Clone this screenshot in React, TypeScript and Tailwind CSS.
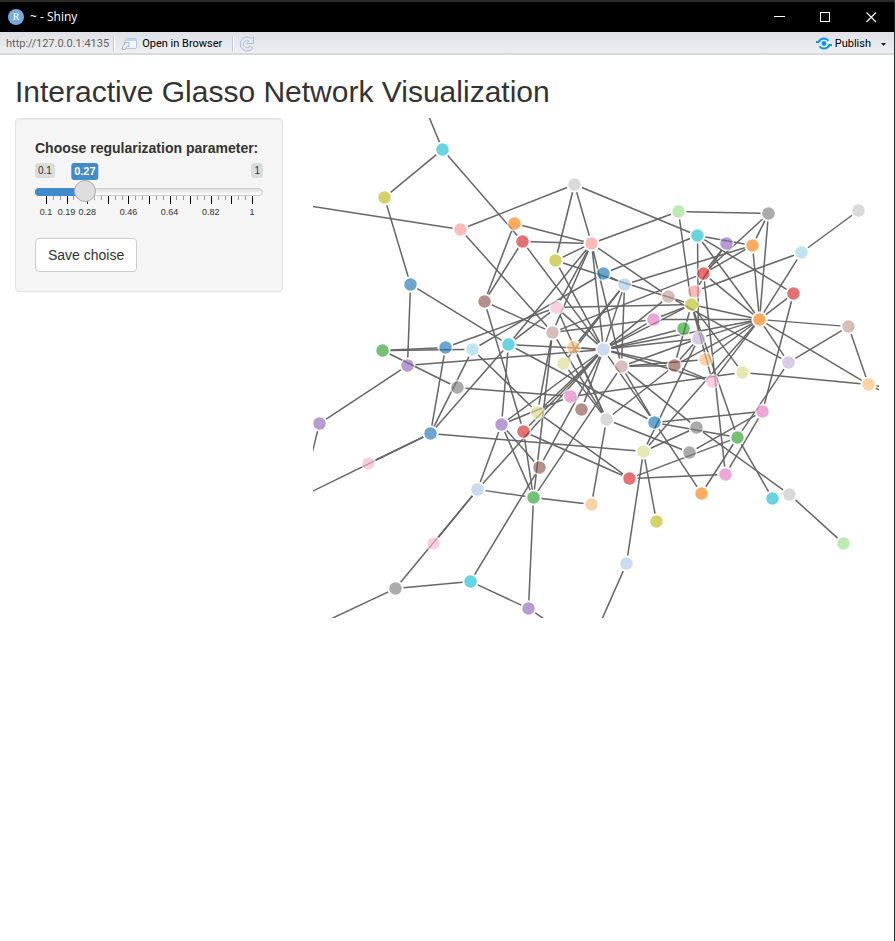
import { useState } from "react";

type Point = [number, number];

const C = {
  blue: "#1f77b4", sky: "#aec7e8", orange: "#ff7f0e", peach: "#ffbb78", green: "#2ca02c", mint: "#98df8a",
  red: "#d62728", salmon: "#ff9896", purple: "#9467bd", lilac: "#c5b0d5", brown: "#8c564b", tan: "#c49c94",
  magenta: "#e377c2", pink: "#f7b6d2", grey: "#7f7f7f", silver: "#c7c7c7", olive: "#bcbd22", khaki: "#dbdb8d",
  cyan: "#17becf", ice: "#9edae5",
};

const nodes: [number, number, string][] = [
  [442, 149, C.cyan], [384, 197, C.olive], [460, 229, C.salmon], [410, 284, C.blue], [514, 223, C.orange],
  [522, 241, C.red], [574, 184, C.silver], [591, 243, C.salmon], [555, 260, C.olive], [603, 273, C.blue],
  [624, 284, C.sky], [484, 301, C.brown], [556, 307, C.pink], [552, 332, C.tan], [508, 344, C.cyan],
  [573, 347, C.peach], [603, 349, C.sky], [563, 363, C.khaki], [621, 366, C.tan], [472, 349, C.ice],
  [445, 347, C.blue], [382, 350, C.green], [407, 365, C.purple], [457, 387, C.grey], [319, 423, C.purple],
  [430, 433, C.blue], [368, 463, C.pink], [477, 489, C.sky], [433, 543, C.pink], [395, 588, C.grey],
  [470, 581, C.cyan], [528, 608, C.purple], [501, 424, C.purple], [523, 431, C.red], [537, 412, C.khaki],
  [570, 396, C.magenta], [581, 409, C.brown], [606, 419, C.silver], [539, 467, C.brown], [533, 497, C.green],
  [591, 504, C.peach], [654, 422, C.blue], [643, 451, C.khaki], [629, 478, C.red], [656, 521, C.olive],
  [626, 563, C.sky], [678, 211, C.mint], [697, 235, C.cyan], [726, 243, C.purple], [752, 245, C.orange],
  [768, 213, C.grey], [703, 273, C.red], [694, 291, C.salmon], [668, 296, C.tan], [691, 304, C.olive],
  [653, 319, C.magenta], [683, 328, C.green], [698, 338, C.lilac], [759, 319, C.orange], [705, 359, C.peach],
  [674, 365, C.brown], [712, 381, C.pink], [742, 372, C.khaki], [801, 252, C.ice], [858, 210, C.silver],
  [793, 293, C.red], [848, 326, C.tan], [788, 362, C.lilac], [868, 384, C.peach], [762, 411, C.magenta],
  [737, 437, C.green], [696, 427, C.grey], [689, 452, C.grey], [725, 474, C.magenta], [701, 493, C.orange],
  [772, 498, C.cyan], [789, 494, C.silver], [843, 543, C.mint],
];

const links: Point[] = [
  [0, 1], [0, 5], [1, 3], [3, 22], [3, 14], [2, 6], [2, 13], [4, 7], [4, 11], [5, 7], [5, 11], [5, 16],
  [6, 8], [6, 7], [6, 47], [7, 46], [7, 8], [7, 53], [8, 54], [9, 10], [7, 14], [7, 12], [7, 13], [7, 16],
  [7, 18], [8, 16], [9, 19], [9, 47], [10, 49], [10, 15], [10, 16], [10, 17], [10, 18], [11, 13], [11, 33],
  [12, 14], [12, 16], [12, 20], [12, 37], [12, 54], [13, 37], [13, 51], [13, 55], [13, 34], [13, 39],
  [14, 16], [14, 41], [14, 32], [14, 25], [15, 37], [15, 16], [17, 37], [16, 22], [16, 32], [16, 34],
  [16, 33], [16, 36], [16, 38], [16, 27], [16, 41], [16, 53], [16, 54], [16, 55], [16, 56], [16, 57],
  [16, 58], [16, 60], [16, 61], [18, 39], [18, 41], [18, 57], [18, 59], [18, 60], [18, 71], [19, 21],
  [19, 25], [19, 34], [20, 21], [20, 25], [21, 23], [22, 24], [23, 35], [25, 26], [25, 42], [27, 28],
  [27, 29], [27, 32], [27, 39], [29, 30], [30, 31], [30, 38], [31, 39], [32, 35], [32, 38], [32, 39],
  [33, 39], [33, 43], [34, 43], [35, 62], [37, 40], [37, 60], [37, 72], [39, 40], [41, 69], [41, 70],
  [41, 74], [42, 44], [42, 45], [42, 57], [42, 58], [42, 71], [43, 70], [43, 73], [46, 50], [46, 54],
  [47, 49], [47, 57], [47, 58], [47, 65], [48, 51], [48, 52], [49, 50], [49, 51], [49, 58], [50, 51],
  [50, 58], [51, 58], [51, 73], [52, 63], [53, 67], [54, 55], [54, 58], [54, 60], [54, 61], [54, 62],
  [54, 70], [55, 58], [57, 58], [57, 60], [58, 59], [58, 60], [58, 61], [58, 63], [58, 65], [58, 66],
  [58, 67], [58, 68], [60, 61], [62, 68], [63, 64], [65, 69], [66, 67], [66, 68], [67, 70], [69, 72],
  [69, 73], [70, 74], [70, 75], [71, 76], [76, 77],
];

// Links whose far end lies outside the visible canvas.
const openLinks: [number, Point][] = [
  [0, [425, 108]], [2, [293, 203]], [25, [293, 500]], [24, [309, 463]], [29, [310, 628]],
  [31, [558, 628]], [45, [597, 629]], [68, [898, 389]], [68, [898, 399]],
];

const GAP = 8;

function Link({ from, to, open }: { from: Point; to: Point; open?: boolean }) {
  const dx = to[0] - from[0];
  const dy = to[1] - from[1];
  const len = Math.hypot(dx, dy);
  const gap = Math.min(GAP, len / 2);
  const ux = (dx / len) * gap;
  const uy = (dy / len) * gap;
  return (
    <line
      x1={from[0] + ux}
      y1={from[1] + uy}
      x2={open ? to[0] : to[0] - ux}
      y2={open ? to[1] : to[1] - uy}
    />
  );
}

function Network() {
  const at = (i: number): Point => [nodes[i][0], nodes[i][1]];
  return (
    <svg viewBox="312.5 117.5 566 500" className="block h-auto w-full overflow-hidden" role="img" aria-label="Network graph">
      <g stroke="#666" strokeWidth="1.5">
        {links.map(([a, b]) => <Link key={`${a}-${b}`} from={at(a)} to={at(b)} />)}
        {openLinks.map(([a, end]) => <Link key={`${a}:${end}`} from={at(a)} to={end} open />)}
      </g>
      {nodes.map(([x, y, fill], i) => (
        <circle key={i} cx={x} cy={y} r="7" fill={fill} stroke="#fff" strokeWidth="1.5" opacity="0.65" />
      ))}
    </svg>
  );
}

const MIN = 0.1;
const MAX = 1;
const scaleLabels = ["0.1", "0.19", "0.28", "0.46", "0.64", "0.82", "1"];

// Left edge of a value on the scale, allowing for half the thumb at each end.
function offset(value: number) {
  const t = (value - MIN) / (MAX - MIN);
  return `calc(11px + (100% - 22px) * ${t})`;
}

function RegularizationSlider() {
  const [value, setValue] = useState(0.27);
  return (
    <div>
      <label htmlFor="rho" className="mb-[5px] block text-sm font-bold">Choose regularization parameter:</label>
      <div className="relative flex h-[17px] items-start justify-between text-[10px] leading-[15px]">
        <span className="rounded-[3px] bg-[#dcdcdc] px-[3px]">0.1</span>
        <span className="rounded-[3px] bg-[#dcdcdc] px-[3px]">1</span>
        <output
          htmlFor="rho"
          className="absolute top-0 -translate-x-1/2 rounded-[3px] bg-[#428bca] px-[3px] text-[11px] leading-[17px] font-bold text-white"
          style={{ left: offset(value) }}
        >
          {value}
        </output>
      </div>
      <div className="relative h-[22px]">
        <div className="absolute inset-x-0 top-2 h-2 rounded-lg border border-[#ccc] bg-linear-to-b from-[#dedede] to-white" />
        <div className="absolute top-2 left-0 h-2 rounded-l-lg bg-[#428bca]" style={{ width: offset(value) }} />
        <svg className="absolute inset-x-0 top-4 h-2 w-full" viewBox="0 0 228 8" preserveAspectRatio="none" shapeRendering="crispEdges" aria-hidden="true">
          {Array.from({ length: 31 }, (_, i) => (
            <rect key={i} x={Math.round(11 + (i * 206) / 30)} y="0" width="1" height={i % 3 ? 4 : 8} fill={i % 3 ? "#999" : "#000"} />
          ))}
        </svg>
        <input
          id="rho"
          type="range"
          min={MIN}
          max={MAX}
          step={0.01}
          value={value}
          onChange={(e) => setValue(Number(e.target.value))}
          className="absolute inset-0 m-0 h-[22px] w-full cursor-pointer appearance-none bg-transparent [&::-webkit-slider-thumb]:size-[22px] [&::-webkit-slider-thumb]:appearance-none [&::-webkit-slider-thumb]:rounded-full [&::-webkit-slider-thumb]:border [&::-webkit-slider-thumb]:border-[#ababab] [&::-webkit-slider-thumb]:bg-[#dedede] [&::-webkit-slider-thumb]:shadow-[1px_1px_3px_rgba(255,255,255,0.3)]"
        />
      </div>
      <div className="relative mt-[5px] h-[11px] text-[9px] leading-[11px]">
        {scaleLabels.map((label) => (
          <span key={label} className="absolute top-0 -translate-x-1/2" style={{ left: offset(Number(label)) }}>{label}</span>
        ))}
      </div>
    </div>
  );
}

function TitleBar() {
  return (
    <header className="flex h-8 items-center border-t-2 border-[#2b2b2b] bg-black pl-2 text-white">
      <svg width="16" height="16" viewBox="0 0 16 16" aria-hidden="true">
        <circle cx="8" cy="8" r="8" fill="#75aadb" />
        <text x="8" y="11" textAnchor="middle" fontSize="10" fill="#fff" className="font-['Liberation_Serif',serif]">R</text>
      </svg>
      <h1 className="ml-1.5 flex-1 text-xs">~ - Shiny</h1>
      <button type="button" aria-label="Minimize" className="grid h-full w-[46px] place-items-center">
        <svg width="11" height="11" viewBox="0 0 11 11"><path d="M0 4.5H11" stroke="#fff" /></svg>
      </button>
      <button type="button" aria-label="Maximize" className="grid h-full w-[46px] place-items-center">
        <svg width="11" height="11" viewBox="0 0 11 11"><rect x=".5" y=".5" width="9" height="9" fill="none" stroke="#fff" /></svg>
      </button>
      <button type="button" aria-label="Close" className="grid h-full w-[46px] place-items-center">
        <svg width="11" height="11" viewBox="0 0 11 11"><path d="M.5 .5L10 10M10 .5L.5 10" stroke="#fff" strokeWidth="1.1" /></svg>
      </button>
    </header>
  );
}

function Divider() {
  return <span className="h-4 w-0.5 border-r border-l border-r-white border-l-[#c4c6cb]" />;
}

function Toolbar() {
  return (
    <div className="flex h-[23px] items-center border-b-2 border-[#d6dadf] bg-linear-to-b from-[#dfe0e5] to-[#eeeff2] pt-[3px] pr-2 pl-1.5 font-[Roboto,'Open_Sans',sans-serif] text-[11px] leading-4 text-black">
      <span className="mr-1 text-[#616161]">http://127.0.0.1:4135</span>
      <Divider />
      <button type="button" className="ml-1.5 flex items-center gap-1">
        <svg width="17" height="16" viewBox="0 0 17 16" aria-hidden="true">
          <rect x="4.5" y="2.5" width="11" height="10" rx="1.5" fill="#f1f4f8" stroke="#b9c8d8" />
          <path d="M5 3H15V5H5Z" fill="#b9d7ef" />
          <path d="M1 13.500L2 9.500L4 8L3 6.500H8V11L6.500 10L4 13.500Z" fill="#e8eef5" stroke="#a9b8c8" />
        </svg>
        Open in Browser
      </button>
      <span className="ml-2.5 flex"><Divider /></span>
      <button type="button" aria-label="Refresh" className="ml-[5px]">
        <svg width="16" height="16" viewBox="0 0 16 16" aria-hidden="true">
          <path d="M14 12A7 7 0 1 1 12.500 2.500L14.500 1V7.500H8L10 5.200A3.600 3.600 0 1 0 11.200 10Z" fill="#dfeaf5" stroke="#afbfd0" strokeLinejoin="round" />
        </svg>
      </button>
      <button type="button" className="ml-auto flex items-center gap-[3px]">
        <svg width="16" height="16" viewBox="0 0 16 16" fill="none" aria-hidden="true">
          <circle cx="8" cy="7.500" r="2.400" fill="#0c97e4" />
          <path d="M0 6H2.500C3.800 3.500 5.500 2.500 8 2.500C10 2.500 11.500 3.300 12.500 4.800" stroke="#0c97e4" strokeWidth="2" />
          <path d="M16 9H13.500C12.200 11.500 10.500 12.500 8 12.500C6 12.500 4.500 11.700 3.500 10.200" stroke="#0c97e4" strokeWidth="2" />
        </svg>
        Publish
      </button>
      <button type="button" aria-label="Publish options" className="ml-2.5">
        <svg width="5" height="3" viewBox="0 0 5 3"><path d="M0 0H5L2.500 3Z" fill="#222" /></svg>
      </button>
    </div>
  );
}

export default function App() {
  return (
    <div className="min-h-screen border-r border-[#2b2d33] bg-white font-['Open_Sans','Noto_Sans',sans-serif]">
      <TitleBar />
      <Toolbar />
      <main className="px-[15px] font-['Liberation_Sans',Arial,sans-serif] text-sm text-[#333]">
        <h2 className="mt-5 mb-2.5 text-[30px] leading-[33px]">Interactive Glasso Network Visualization</h2>
        <div className="-mx-[15px] grid grid-cols-3 items-start">
          <div className="px-[15px]">
            <form className="rounded-sm border border-[#e3e3e3] bg-[#f5f5f5] p-[19px] shadow-[inset_0_1px_1px_rgba(0,0,0,0.05)]" onSubmit={(e) => e.preventDefault()}>
              <RegularizationSlider />
              <button type="submit" className="mt-5 h-[34px] rounded-sm border border-[#ccc] bg-white px-3">Save choise</button>
            </form>
          </div>
          <div className="col-span-2 px-[15px]">
            <Network />
          </div>
        </div>
      </main>
    </div>
  );
}
